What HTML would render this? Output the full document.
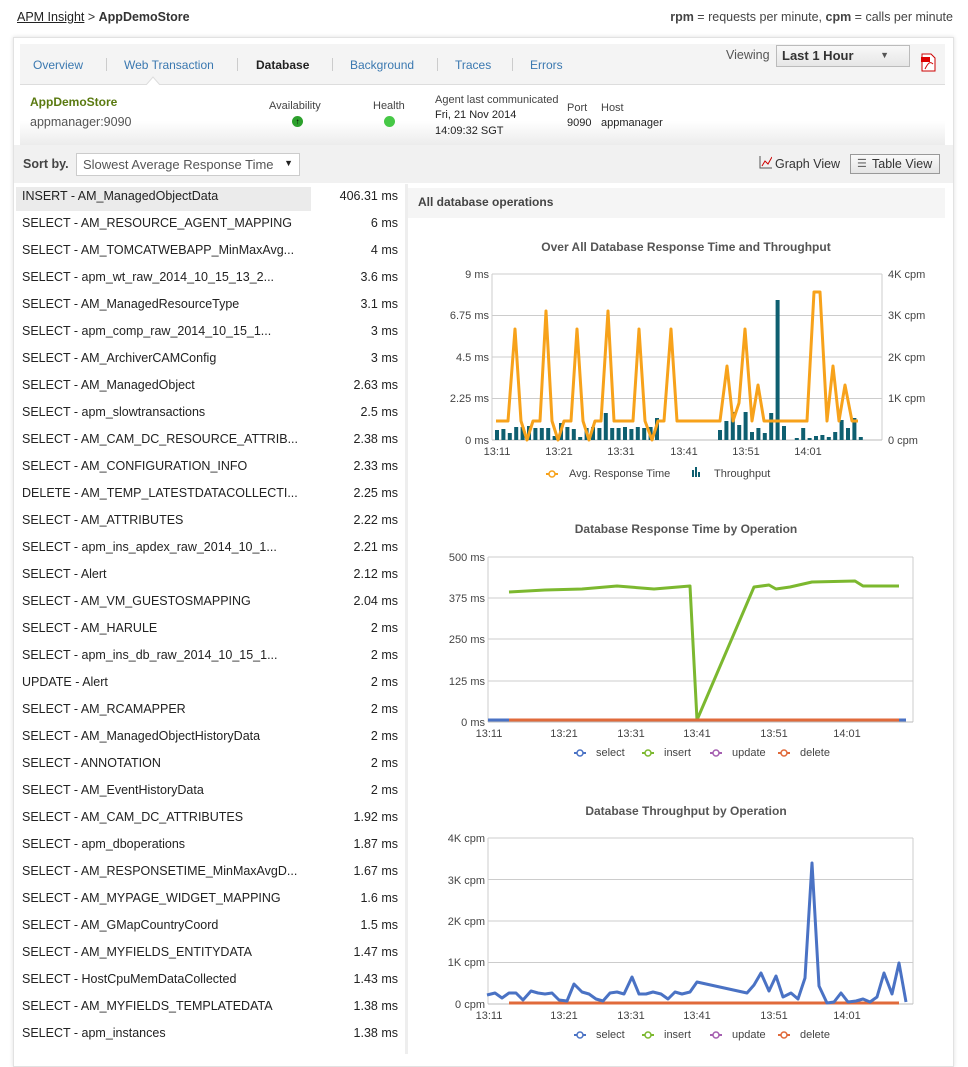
<!DOCTYPE html>
<html><head><meta charset="utf-8"><style>
*{margin:0;padding:0;box-sizing:border-box}
body{width:968px;height:1054px;overflow:hidden;background:#fff;font-family:"Liberation Sans",sans-serif;color:#333;position:relative}
.a{position:absolute;white-space:nowrap}
.row{position:absolute;left:16px;width:389px;height:25px;font-size:12.5px;color:#222;line-height:25px}
.row span{position:absolute;left:6px}
.row b{position:absolute;right:7px;font-weight:normal}
.tab{position:absolute;top:58px;font-size:12px;color:#3a78b0}
.sep{position:absolute;top:58px;width:1px;height:13px;background:#ccc}
</style></head><body>
<div class="a" style="left:17px;top:10px;font-size:12.5px"><span style="text-decoration:underline;color:#222">APM Insight</span> &gt; <b style="color:#333">AppDemoStore</b></div>
<div class="a" style="right:15px;top:10px;font-size:12.5px;color:#444"><b>rpm</b> = requests per minute, <b>cpm</b> = calls per minute</div>
<div class="a" style="left:13px;top:37px;width:941px;height:1030px;border:1px solid #e2e2e2;box-shadow:0 0 4px #ddd"></div>
<div class="a" style="left:20px;top:44px;width:925px;height:41px;background:#f4f4f4;border-bottom:1px solid #ddd"></div>
<div class="tab" style="left:33px">Overview</div><div class="sep" style="left:106px"></div>
<div class="tab" style="left:124px">Web Transaction</div><div class="sep" style="left:237px"></div>
<div class="tab" style="left:256px;color:#222;font-weight:bold">Database</div><div class="sep" style="left:332px"></div>
<div class="tab" style="left:350px">Background</div><div class="sep" style="left:437px"></div>
<div class="tab" style="left:455px">Traces</div><div class="sep" style="left:512px"></div>
<div class="tab" style="left:530px">Errors</div>
<svg class="a" style="left:146px;top:76px" width="14" height="10"><path d="M0 9L7 1L14 9" fill="#fff" stroke="#ddd"/></svg>
<div class="a" style="left:726px;top:48px;font-size:12.5px;color:#555">Viewing</div>
<div class="a" style="left:776px;top:45px;width:134px;height:22px;border:1px solid #bbb;background:linear-gradient(#f8f8f8,#e6e6e6);font-size:13px;font-weight:bold;color:#333;padding:2px 5px">Last 1 Hour<span style="position:absolute;right:20px;top:4px;font-size:9px;color:#555">▼</span></div>
<svg class="a" style="left:920px;top:53px" width="16" height="19"><path d="M2 1h9l4 4v13H2z" fill="#fff" stroke="#c00"/><rect x="1" y="4" width="9" height="5" fill="#d00"/><path d="M5 16c3-6 5-8 8-5" stroke="#c00" fill="none"/></svg>
<div class="a" style="left:20px;top:85px;width:925px;height:60px;background:linear-gradient(#fff 60%,#ececec)"></div>
<div class="a" style="left:30px;top:95px;font-size:12px;font-weight:bold;color:#5a7a10">AppDemoStore</div>
<div class="a" style="left:30px;top:115px;font-size:12.5px;color:#555">appmanager:9090</div>
<div class="a" style="left:269px;top:100px;font-size:11px;color:#444">Availability</div>
<div class="a" style="left:292px;top:116px;width:11px;height:11px;border-radius:50%;background:#2ca02c;color:#000;font-size:8px;text-align:center;line-height:11px">↑</div>
<div class="a" style="left:373px;top:100px;font-size:11px;color:#444">Health</div>
<div class="a" style="left:384px;top:116px;width:11px;height:11px;border-radius:50%;background:#46c846"></div>
<div class="a" style="left:435px;top:94px;font-size:11px;color:#444">Agent last communicated</div>
<div class="a" style="left:435px;top:109px;font-size:11px;color:#222">Fri, 21 Nov 2014</div>
<div class="a" style="left:435px;top:125px;font-size:11px;color:#222">14:09:32 SGT</div>
<div class="a" style="left:567px;top:102px;font-size:11px;color:#444">Port</div>
<div class="a" style="left:601px;top:102px;font-size:11px;color:#444">Host</div>
<div class="a" style="left:567px;top:117px;font-size:11px;color:#222">9090</div>
<div class="a" style="left:601px;top:117px;font-size:11px;color:#222">appmanager</div>
<div class="a" style="left:14px;top:145px;width:939px;height:38px;background:#f1f1f1"></div>
<div class="a" style="left:23px;top:157px;font-size:12.5px;font-weight:bold;color:#444">Sort by.</div>
<div class="a" style="left:76px;top:153px;width:224px;height:23px;border:1px solid #ccc;background:#fff;font-size:13px;color:#555;padding:3px 6px">Slowest Average Response Time<span style="position:absolute;right:6px;top:4px;font-size:9px;color:#222">▼</span></div>
<svg class="a" style="left:759px;top:156px" width="13" height="13"><path d="M1 0v12h12" stroke="#555" fill="none"/><path d="M3 10l3-5 3 3 4-7" stroke="#c00" fill="none"/></svg>
<div class="a" style="left:775px;top:157px;font-size:12.5px;color:#333">Graph View</div>
<div class="a" style="left:850px;top:154px;width:90px;height:20px;border:1px solid #999;background:linear-gradient(#fafafa,#e4e4e4);font-size:12.5px;color:#333;padding:2px 0 0 21px">Table View<span style="position:absolute;left:6px;top:2px;font-size:11px;color:#666">☰</span></div>
<div class="a" style="left:405px;top:184px;width:3px;height:870px;background:#eee"></div>
<div class="a" style="left:408px;top:188px;width:537px;height:30px;background:#f5f5f5"></div>
<div class="a" style="left:418px;top:195px;font-size:12px;font-weight:bold;color:#444">All database operations</div>
<div class="a" style="left:16px;top:187px;width:295px;height:24px;background:#ebebeb"></div>
<div id="list"></div>
<svg class="a" style="left:0;top:0" width="968" height="1054" font-family="Liberation Sans,sans-serif">
<g font-size="12" font-weight="bold" fill="#555" text-anchor="middle">
<text x="686" y="251">Over All Database Response Time and Throughput</text>
<text x="686" y="533">Database Response Time by Operation</text>
<text x="686" y="815">Database Throughput by Operation</text></g>
<g stroke="#ccc" fill="none">
<path d="M492 274H882M492 315.5H882M492 357H882M492 398.5H882M492 274V440M882 274V440"/>
<path d="M488 557H913M488 598H913M488 639H913M488 681H913M488 557V722M913 557V722"/>
<path d="M488 838H913M488 879.5H913M488 921H913M488 962.5H913M488 838V1004M913 838V1004"/>
</g>
<path d="M492 440H882M488 722H913M488 1004H913" stroke="#bbb"/>
<g font-size="11" fill="#444" text-anchor="end">
<text x="489" y="278">9 ms</text><text x="489" y="319">6.75 ms</text><text x="489" y="361">4.5 ms</text><text x="489" y="402">2.25 ms</text><text x="489" y="444">0 ms</text>
<text x="485" y="561">500 ms</text><text x="485" y="602">375 ms</text><text x="485" y="643">250 ms</text><text x="485" y="685">125 ms</text><text x="485" y="726">0 ms</text>
<text x="485" y="842">4K cpm</text><text x="485" y="884">3K cpm</text><text x="485" y="925">2K cpm</text><text x="485" y="966">1K cpm</text><text x="485" y="1008">0 cpm</text>
</g>
<g font-size="11" fill="#444"><text x="888" y="278">4K cpm</text><text x="888" y="319">3K cpm</text><text x="888" y="361">2K cpm</text><text x="888" y="402">1K cpm</text><text x="888" y="444">0 cpm</text></g>
<g font-size="11" fill="#444" text-anchor="middle">
<text x="497" y="455">13:11</text><text x="559" y="455">13:21</text><text x="621" y="455">13:31</text><text x="684" y="455">13:41</text><text x="746" y="455">13:51</text><text x="808" y="455">14:01</text>
<text x="489" y="737">13:11</text><text x="564" y="737">13:21</text><text x="631" y="737">13:31</text><text x="697" y="737">13:41</text><text x="774" y="737">13:51</text><text x="847" y="737">14:01</text>
<text x="489" y="1019">13:11</text><text x="564" y="1019">13:21</text><text x="631" y="1019">13:31</text><text x="697" y="1019">13:41</text><text x="774" y="1019">13:51</text><text x="847" y="1019">14:01</text>
</g>
<g id="bars" fill="#0e5f70"></g>
<polyline fill="none" stroke="#f7a21b" stroke-width="3" stroke-linejoin="round" points="496,421 508,421 515,329 521,421 527,440 533,421 540,421 546,311 552,421 558,440 564,421 571,421 577,329 583,421 589,440 595,421 601,421 608,311 614,421 633,421 639,329 645,421 652,440 658,421 664,421 671,329 677,421 720,421 727,366 733,421 739,403 745,329 752,421 758,385 764,421 807,421 814,292 820,292 827,421 833,366 839,421 845,385 852,421 858,421"/>
<polyline fill="none" stroke="#7cb82f" stroke-width="3" stroke-linejoin="round" points="509,592 545,590 582,589 617,586 654,589 690,586 697,720 754,587 769,585 776,589 790,587 812,582 855,581 863,586 870,586 899,586"/>
<path d="M488 720H906" stroke="#4a72c4" stroke-width="3"/>
<path d="M509 720H899" stroke="#e06a3b" stroke-width="3"/>
<path d="M509 1003H899" stroke="#e06a3b" stroke-width="3"/>
<polyline fill="none" stroke="#4a72c4" stroke-width="3" stroke-linejoin="round" points="487,995 495,993 502,998 509,993 516,993 523,1000 531,991 538,993 545,994 552,993 559,1000 567,1001 574,984 582,992 589,994 596,999 603,1001 610,993 617,992 624,994 632,977 639,994 646,994 653,992 661,994 668,999 675,992 682,994 690,992 697,982 747,993 754,985 761,973 769,991 776,976 783,997 791,993 798,999 805,978 812,863 819,986 827,1003 834,1002 841,993 848,1002 856,1001 863,999 870,1002 877,997 884,973 892,994 899,963 906,1002"/>
<g font-size="11" fill="#444">
<path d="M546 474h12" stroke="#f7a21b" stroke-width="2"/><circle cx="552" cy="474" r="3" fill="#fff" stroke="#f7a21b" stroke-width="1.5"/>
<text x="569" y="477">Avg. Response Time</text>
<rect x="692" y="470" width="2" height="7" fill="#0e5f70"/><rect x="695" y="467" width="2" height="10" fill="#0e5f70"/><rect x="698" y="472" width="2" height="5" fill="#0e5f70"/>
<text x="714" y="477">Throughput</text>
</g>
<g id="leg" font-size="11" fill="#444"></g>
</svg>
<script>
var rows=[["INSERT - AM_ManagedObjectData","406.31 ms"],["SELECT - AM_RESOURCE_AGENT_MAPPING","6 ms"],["SELECT - AM_TOMCATWEBAPP_MinMaxAvg...","4 ms"],["SELECT - apm_wt_raw_2014_10_15_13_2...","3.6 ms"],["SELECT - AM_ManagedResourceType","3.1 ms"],["SELECT - apm_comp_raw_2014_10_15_1...","3 ms"],["SELECT - AM_ArchiverCAMConfig","3 ms"],["SELECT - AM_ManagedObject","2.63 ms"],["SELECT - apm_slowtransactions","2.5 ms"],["SELECT - AM_CAM_DC_RESOURCE_ATTRIB...","2.38 ms"],["SELECT - AM_CONFIGURATION_INFO","2.33 ms"],["DELETE - AM_TEMP_LATESTDATACOLLECTI...","2.25 ms"],["SELECT - AM_ATTRIBUTES","2.22 ms"],["SELECT - apm_ins_apdex_raw_2014_10_1...","2.21 ms"],["SELECT - Alert","2.12 ms"],["SELECT - AM_VM_GUESTOSMAPPING","2.04 ms"],["SELECT - AM_HARULE","2 ms"],["SELECT - apm_ins_db_raw_2014_10_15_1...","2 ms"],["UPDATE - Alert","2 ms"],["SELECT - AM_RCAMAPPER","2 ms"],["SELECT - AM_ManagedObjectHistoryData","2 ms"],["SELECT - ANNOTATION","2 ms"],["SELECT - AM_EventHistoryData","2 ms"],["SELECT - AM_CAM_DC_ATTRIBUTES","1.92 ms"],["SELECT - apm_dboperations","1.87 ms"],["SELECT - AM_RESPONSETIME_MinMaxAvgD...","1.67 ms"],["SELECT - AM_MYPAGE_WIDGET_MAPPING","1.6 ms"],["SELECT - AM_GMapCountryCoord","1.5 ms"],["SELECT - AM_MYFIELDS_ENTITYDATA","1.47 ms"],["SELECT - HostCpuMemDataCollected","1.43 ms"],["SELECT - AM_MYFIELDS_TEMPLATEDATA","1.38 ms"],["SELECT - apm_instances","1.38 ms"]];
var h="";rows.forEach(function(r,i){h+='<div class="row" style="top:'+(184+27*i)+'px"><span>'+r[0]+'</span><b>'+r[1]+'</b></div>'});
document.getElementById("list").innerHTML=h;
var NS="http://www.w3.org/2000/svg",g=document.getElementById("bars");
var b1=[10,11,7,13,13,14,12,12,12,4,17,13,11,3,12,13,12,27,12,12,13,11,13,12,13,22],b2=[10,19,28,15,28,8,12,7,27,140,14,0,2,12,2,4,5,3,8,20,12,22,3];
b1.forEach(function(v,i){var r=document.createElementNS(NS,"rect");r.setAttribute("x",495+6.4*i);r.setAttribute("y",440-v);r.setAttribute("width",4);r.setAttribute("height",v);g.appendChild(r)});
b2.forEach(function(v,i){var r=document.createElementNS(NS,"rect");r.setAttribute("x",718+6.4*i);r.setAttribute("y",440-v);r.setAttribute("width",4);r.setAttribute("height",v);g.appendChild(r)});
var L=document.getElementById("leg"),s="";
[756,1038].forEach(function(y){[["select",580,"#4a72c4"],["insert",648,"#7cb82f"],["update",716,"#a55fb0"],["delete",784,"#e06a3b"]].forEach(function(e){s+='<path d="M'+(e[1]-6)+' '+(y-3)+'h12" stroke="'+e[2]+'" stroke-width="2"/><circle cx="'+e[1]+'" cy="'+(y-3)+'" r="3" fill="#fff" stroke="'+e[2]+'" stroke-width="1.5"/><text x="'+(e[1]+16)+'" y="'+y+'">'+e[0]+'</text>'})});
L.innerHTML=s;
</script>
</body></html>
